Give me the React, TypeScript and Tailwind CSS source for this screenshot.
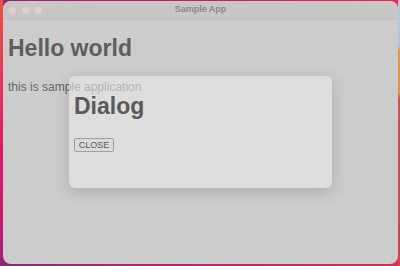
export default function App() {
  return (
    <div className="w-[400px] h-[266px] flex overflow-hidden bg-[linear-gradient(to_right,#8a2a78_0%,#c21d6a_40%,#e02a50_100%)] font-['Liberation_Sans',Arial,sans-serif]">
      {/* wallpaper strips */}
      <div className="w-[3px] h-full bg-[linear-gradient(to_bottom,#e5564c_0%,#e23d58_25%,#d81f68_55%,#c01c6e_85%,#8a2a78_100%)]" />
      <div className="flex-1 flex flex-col pt-[1px] pb-[2px]">
        <div className="relative flex-1 flex flex-col rounded-[8px] overflow-hidden bg-[#cccccc]">
          {/* title bar */}
          <div className="h-[19px] shrink-0 relative flex items-center justify-center bg-[#c9c7c6] border-b border-[#c2c0bf]">
            <div className="absolute left-[6px] top-[6px] flex gap-[6px]">
              <span className="w-[7px] h-[7px] rounded-full bg-[#dccfd0]" />
              <span className="w-[7px] h-[7px] rounded-full bg-[#dccfd0]" />
              <span className="w-[7px] h-[7px] rounded-full bg-[#dccfd0]" />
            </div>
            <span className="text-[9px] font-bold text-[#8a8a8a]">Sample App</span>
          </div>
          {/* content */}
          <div className="flex-1 px-[5px] pt-[15px]">
            <h1 className="text-[23px] leading-[26px] font-bold text-[#5e5e5e]">Hello world</h1>
            <p className="mt-[19px] text-[12px] leading-[14px] text-[#666666]">this is sample application</p>
          </div>
          {/* dialog */}
          <div className="absolute left-[66px] top-[75px] w-[263px] h-[112px] rounded-[6px] bg-[rgba(232,232,232,0.6)] shadow-[0_4px_16px_rgba(0,0,0,0.16)] px-[5px] pt-[17px]">
            <h2 className="text-[23px] leading-[26px] font-bold text-[#5a5a5a]">Dialog</h2>
            <button className="mt-[19px] w-[40px] h-[14px] flex items-center justify-center border border-[#a0a0a0] rounded-[2px] bg-[#dadada] text-[9px] leading-none text-[#5a5a5a]">
              CLOSE
            </button>
          </div>
        </div>
      </div>
      <div className="w-[2px] h-full bg-[linear-gradient(to_bottom,#b9c9dc_0%,#aec3da_17%,#e8983c_19%,#e6943a_35%,#e04a46_37%,#e03c46_100%)]" />
    </div>
  );
}
